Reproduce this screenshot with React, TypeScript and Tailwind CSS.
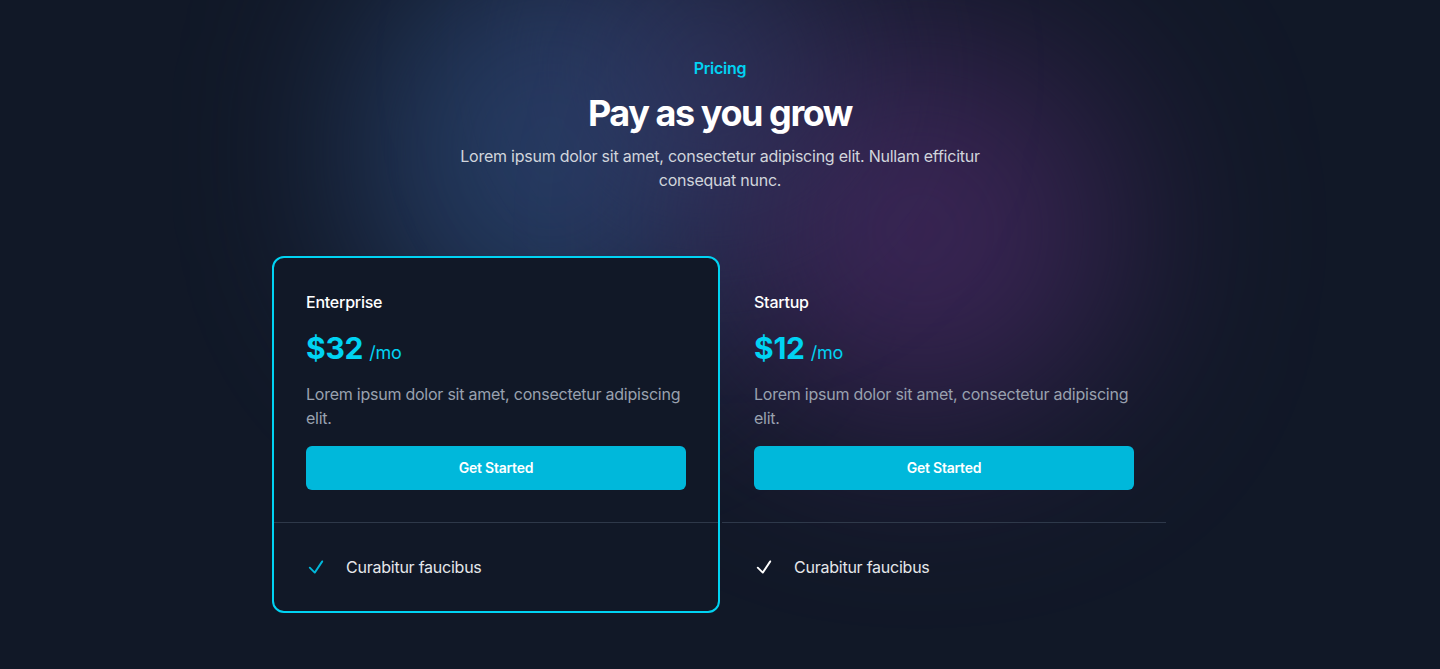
import React from "react";

function Check({ className }: { className: string }) {
  return (
    <svg viewBox="0 0 24 24" fill="none" stroke="currentColor" strokeWidth={2.2} className={className}>
      <path d="M4.5 12.75l6 6 9-13.5" strokeLinecap="round" strokeLinejoin="round" />
    </svg>
  );
}

function Card({ name, price, featured }: { name: string; price: string; featured?: boolean }) {
  return (
    <div
      className={
        "rounded-xl border-2 " +
        (featured ? "border-cyan-400 bg-[#111827]" : "border-transparent")
      }
    >
      <div className="px-8 pt-8 pb-8">
        <h3 className="text-base leading-6 font-medium text-white">{name}</h3>
        <p className="mt-4 flex h-9 items-baseline gap-x-1.5 leading-9">
          <span className="text-3xl leading-9 font-bold text-cyan-400">{price}</span>
          <span className="text-lg leading-none text-cyan-400">/mo</span>
        </p>
        <p className="mt-4 text-base leading-6 text-gray-400">
          Lorem ipsum dolor sit amet, consectetur adipiscing elit.
        </p>
        <button className="mt-4 h-11 w-full rounded-md bg-cyan-500 text-sm font-semibold text-white">
          Get Started
        </button>
      </div>
      <div className="border-t border-gray-700/80 px-8 py-8">
        <ul>
          <li className="flex items-center gap-x-5 text-base leading-6 text-gray-200">
            <Check className={"h-5 w-5 " + (featured ? "text-cyan-500" : "text-white")} />
            Curabitur faucibus
          </li>
        </ul>
      </div>
    </div>
  );
}

export default function App() {
  return (
    <div
      className="relative min-h-[669px] overflow-hidden bg-[#111827] tracking-[-0.015em]"
      style={{ fontFamily: "Inter, 'Noto Sans', sans-serif" }}
    >
      <div className="pointer-events-none absolute inset-0">
        <div className="absolute left-[360px] top-[-60px] h-[420px] w-[380px] rounded-full bg-[#2d4a7a] opacity-70 blur-[90px]" />
        <div className="absolute left-[720px] top-[40px] h-[380px] w-[400px] rounded-full bg-[#4a2a66] opacity-75 blur-[100px]" />
        <div className="absolute left-[560px] top-[-80px] h-[300px] w-[300px] rounded-full bg-[#3a3a6a] opacity-50 blur-[90px]" />
      </div>
      <div className="relative mx-auto max-w-4xl pt-14 pb-14">
        <div className="text-center">
          <p className="text-base leading-6 font-semibold text-cyan-400">Pricing</p>
          <h2 className="mt-[13px] text-4xl leading-10 font-bold tracking-[-0.04em] text-white">
            Pay as you grow
          </h2>
          <p className="mx-auto mt-[11px] max-w-xl text-base leading-6 text-gray-300">
            Lorem ipsum dolor sit amet, consectetur adipiscing elit. Nullam efficitur consequat nunc.
          </p>
        </div>
        <div className="mt-16 grid grid-cols-2">
          <Card name="Enterprise" price="$32" featured />
          <Card name="Startup" price="$12" />
        </div>
      </div>
    </div>
  );
}
